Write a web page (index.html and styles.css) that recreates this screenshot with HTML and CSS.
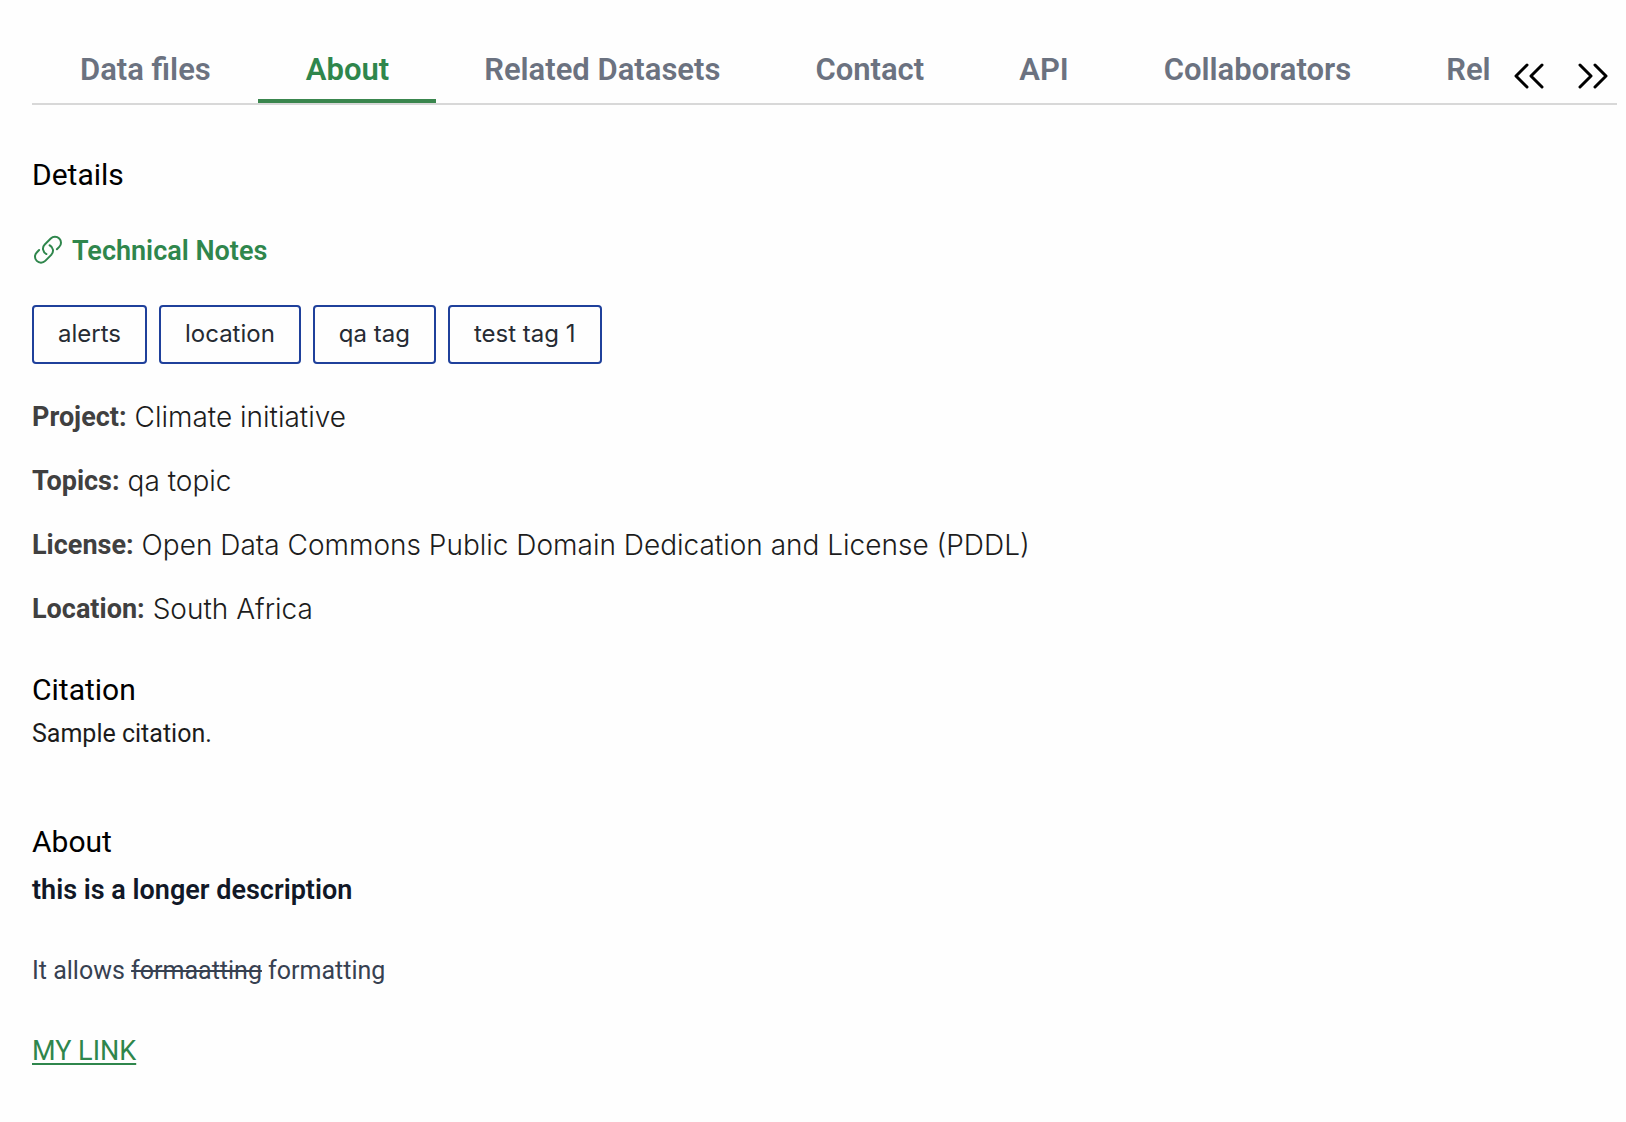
FILE: index.html
```html
<!DOCTYPE html>
<html lang="en">
<head>
<meta charset="utf-8">
<title>About</title>
<meta name="viewport" content="width=device-width, initial-scale=1">
<link rel="stylesheet" href="styles.css">
</head>
<body>
<main class="page">
  <nav class="tabs">
    <div class="tab-list">
      <button class="tab" type="button">Data files</button>
      <button class="tab tab-active" type="button" aria-current="page">About</button>
      <button class="tab" type="button">Related Datasets</button>
      <button class="tab" type="button">Contact</button>
      <button class="tab" type="button">API</button>
      <button class="tab" type="button">Collaborators</button>
      <button class="tab" type="button">Rel</button>
    </div>
    <div class="arrows">
      <button class="arrow" type="button" aria-label="Scroll left">
        <svg viewBox="0 0 32 26" width="32" height="26"><path d="M14 2 3 13l11 11M29 2 18 13l11 11"/></svg>
      </button>
      <button class="arrow" type="button" aria-label="Scroll right">
        <svg viewBox="0 0 32 26" width="32" height="26"><path d="m3 2 11 11L3 24M18 2l11 11-11 11"/></svg>
      </button>
    </div>
  </nav>

  <section class="details">
    <h2 class="heading">Details</h2>
    <a class="notes" href="#notes">
      <svg class="notes-icon" viewBox="0 1 24 24" width="32" height="32"><path d="M13.19 8.688a4.5 4.5 0 0 1 1.242 7.244l-4.5 4.5a4.5 4.5 0 0 1-6.364-6.364l1.757-1.757m13.35-.622 1.757-1.757a4.5 4.5 0 0 0-6.364-6.364l-4.5 4.5a4.5 4.5 0 0 0 1.242 7.244"/></svg>
      <span>Technical Notes</span>
    </a>
    <ul class="tags">
      <li class="tag">alerts</li>
      <li class="tag">location</li>
      <li class="tag">qa tag</li>
      <li class="tag">test tag 1</li>
    </ul>
    <dl class="facts">
      <div class="fact"><dt>Project:</dt><dd>Climate initiative</dd></div>
      <div class="fact"><dt>Topics:</dt><dd>qa topic</dd></div>
      <div class="fact"><dt>License:</dt><dd>Open Data Commons Public Domain Dedication and License (PDDL)</dd></div>
      <div class="fact"><dt>Location:</dt><dd>South Africa</dd></div>
    </dl>
  </section>

  <section class="citation">
    <h2 class="heading">Citation</h2>
    <p class="citation-text">Sample citation.</p>
  </section>

  <section class="about">
    <h2 class="heading">About</h2>
    <div class="prose">
      <p><strong>this is a longer description</strong></p>
      <p>It allows <s>formaatting</s> formatting</p>
      <p><a class="link" href="#link">MY LINK</a></p>
    </div>
  </section>
</main>
</body>
</html>
```
FILE: styles.css
```css
* {
  box-sizing: border-box;
  margin: 0;
  padding: 0;
}

body {
  background: #fefefe;
  color: #1c1c1c;
  font-family: Roboto, "Liberation Sans", sans-serif;
  font-size: 27px;
  line-height: 40px;
}

.page {
  padding: 40px 9px 40px 32px;
}

.tabs {
  display: flex;
  border-bottom: 2px solid #d8d8d8;
}

.tab-list {
  display: flex;
  flex: 1;
  min-width: 0;
  overflow: hidden;
}

.tab {
  flex: none;
  height: 63px;
  padding: 1px 47px 0 48px;
  border: 0;
  border-bottom: 4px solid transparent;
  background: none;
  color: #6b7280;
  font: 600 31px/40px Roboto, "Liberation Sans", sans-serif;
  white-space: nowrap;
}

.tab-active {
  border-color: #3a864e;
  color: #2f864c;
}

.arrows {
  display: flex;
  align-items: center;
  gap: 32px;
  padding: 8px 8px 0 22px;
}

.arrow {
  display: flex;
  border: 0;
  background: none;
}

.arrow path {
  fill: none;
  stroke: #000;
  stroke-width: 3;
  stroke-linecap: round;
  stroke-linejoin: round;
}

.heading {
  color: #000;
  font-size: 30px;
  font-weight: 400;
  line-height: 40px;
}

.details {
  padding-top: 50px;
}

.notes {
  display: flex;
  align-items: center;
  gap: 8px;
  margin-top: 36px;
  color: #2f864c;
  font-weight: 600;
  text-decoration: none;
}

.notes-icon {
  fill: none;
  stroke: currentColor;
  stroke-width: 1.5;
  stroke-linecap: round;
  stroke-linejoin: round;
}

.tags {
  display: flex;
  flex-wrap: wrap;
  gap: 12px;
  margin-top: 34px;
  list-style: none;
}

.tag {
  padding: 9px 24px 10px;
  border: 2px solid #1f409b;
  border-radius: 4px;
  color: #262b33;
  font: 400 24px/36px Inter, sans-serif;
}

.facts {
  display: flex;
  flex-direction: column;
  gap: 24px;
  margin-top: 33px;
}

.fact {
  display: flex;
  align-items: center;
  gap: 8px;
}

.fact dt {
  color: #404040;
  font-weight: 700;
}

.fact dd {
  font-family: Inter, sans-serif;
  font-size: 28px;
  font-weight: 300;
}

.citation {
  margin-top: 41px;
}

.citation-text {
  margin-top: 4px;
  font-size: 25px;
}

.about {
  margin-top: 68px;
}

.prose {
  display: flex;
  flex-direction: column;
  gap: 40px;
  margin-top: 8px;
  color: #374151;
  font-size: 25px;
}

.prose strong {
  color: #111827;
  font-size: 27px;
  font-weight: 600;
}

.link {
  color: #2f864c;
  font-size: 27px;
  text-underline-offset: 3px;
  text-decoration-thickness: 2px;
}
```
